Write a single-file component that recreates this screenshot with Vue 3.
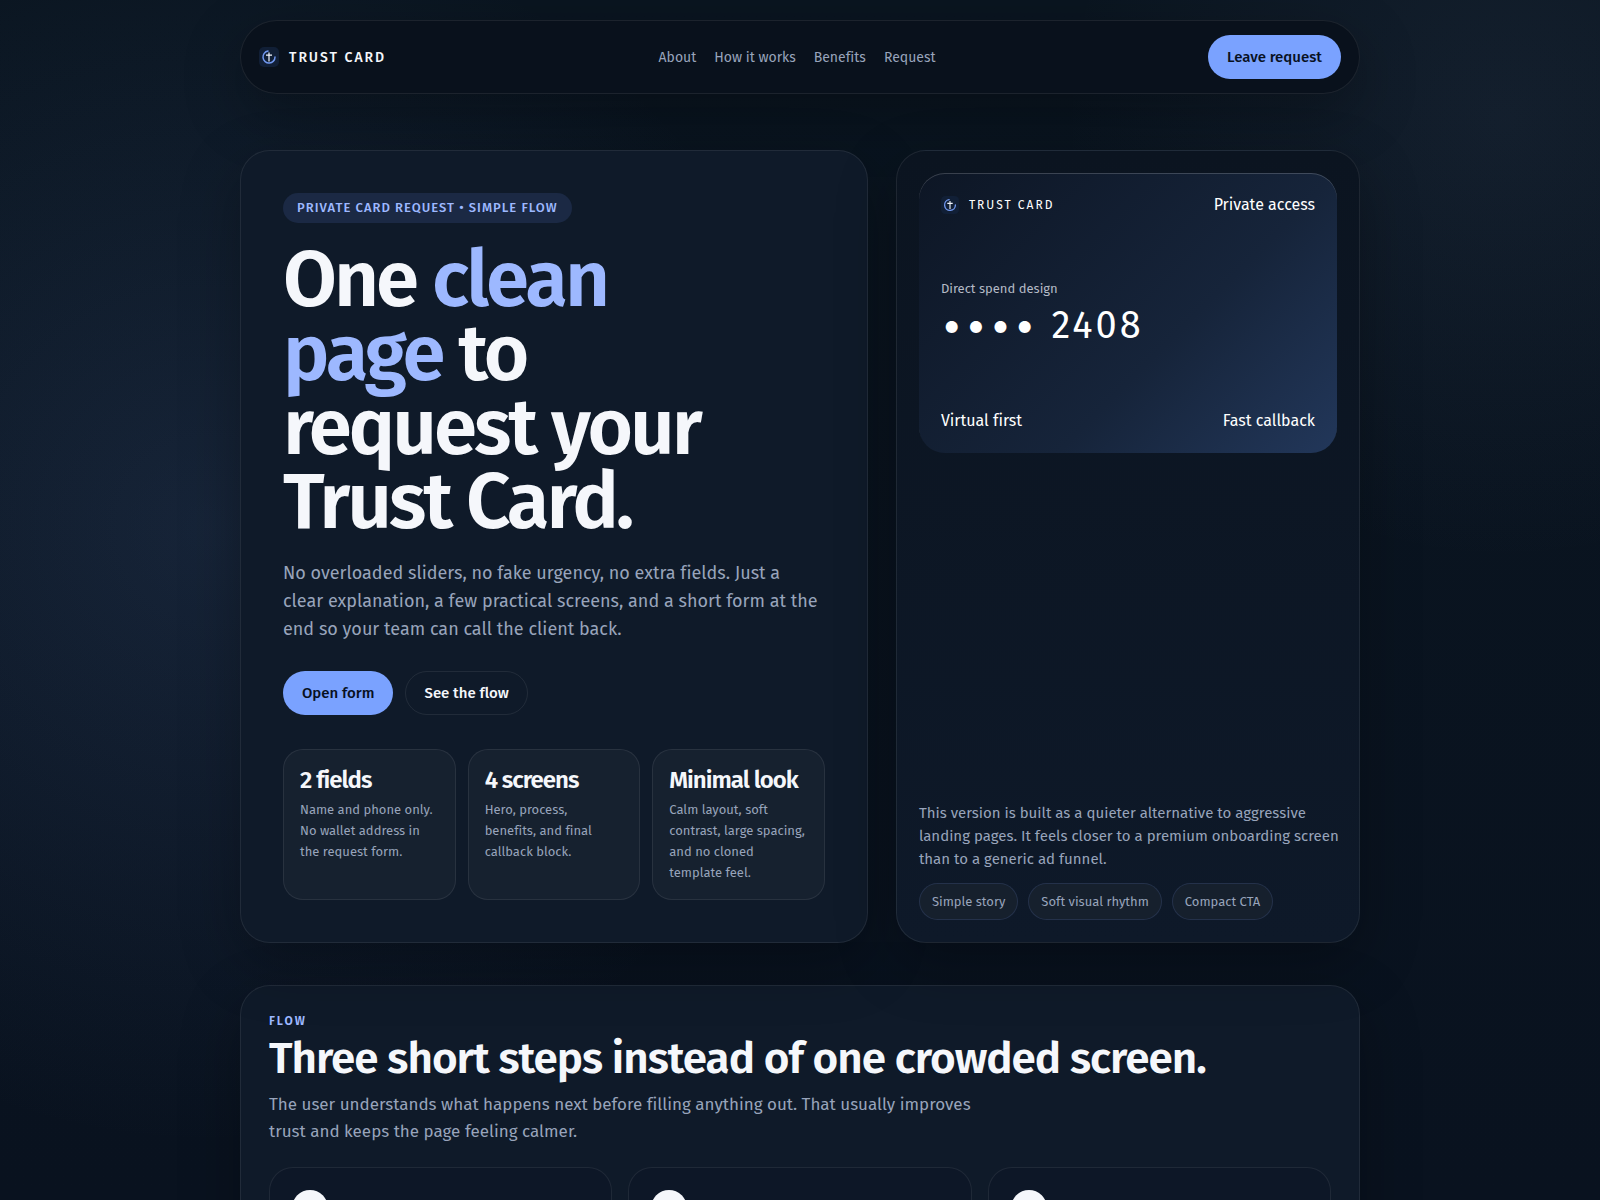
<script setup>
const links = [
  { label: 'About', href: '#about' },
  { label: 'How it works', href: '#flow' },
  { label: 'Benefits', href: '#benefits' },
  { label: 'Request', href: '#request' },
]
const metrics = [
  { title: '2 fields', text: 'Name and phone only. No wallet address in the request form.' },
  { title: '4 screens', text: 'Hero, process, benefits, and final callback block.' },
  { title: 'Minimal look', text: 'Calm layout, soft contrast, large spacing, and no cloned template feel.' },
]
const chips = ['Simple story', 'Soft visual rhythm', 'Compact CTA']
const steps = [1, 2, 3]
</script>

<template>
  <div class="page">
    <header class="topbar">
      <a class="brand" href="#about">
        <svg class="mark" viewBox="0 0 20 20" aria-hidden="true">
          <rect width="20" height="20" rx="5" fill="#111f36" />
          <path d="M9 4.100A6 6 0 1 0 16 10" fill="none" stroke="#7097ef" stroke-width="1.500" stroke-linecap="round" />
          <path d="M10 5.500V14.500M7 8.200H13" fill="none" stroke="#f4f7ff" stroke-width="1.200" />
        </svg>
        <span>TRUST CARD</span>
      </a>
      <nav class="nav">
        <a v-for="link in links" :key="link.label" :href="link.href">{{ link.label }}</a>
      </nav>
      <button class="btn primary" type="button">Leave request</button>
    </header>

    <main>
      <section id="about" class="hero">
        <div class="panel intro">
          <span class="badge">PRIVATE CARD REQUEST • SIMPLE FLOW</span>
          <h1>One <span>clean page</span> to request your Trust Card.</h1>
          <p class="lead">
            No overloaded sliders, no fake urgency, no extra fields. Just a clear explanation, a few
            practical screens, and a short form at the end so your team can call the client back.
          </p>
          <div class="actions">
            <button class="btn primary" type="button">Open form</button>
            <button class="btn ghost" type="button">See the flow</button>
          </div>
          <div class="metrics">
            <article v-for="m in metrics" :key="m.title" class="metric">
              <h3>{{ m.title }}</h3>
              <p>{{ m.text }}</p>
            </article>
          </div>
        </div>

        <aside class="panel preview">
          <div class="card">
            <div class="row">
              <div class="brand small">
                <svg class="mark" viewBox="0 0 20 20" aria-hidden="true">
                  <rect width="20" height="20" rx="5" fill="#111f36" />
                  <path d="M9 4.100A6 6 0 1 0 16 10" fill="none" stroke="#7097ef" stroke-width="1.500" stroke-linecap="round" />
                  <path d="M10 5.500V14.500M7 8.200H13" fill="none" stroke="#f4f7ff" stroke-width="1.200" />
                </svg>
                <span>TRUST CARD</span>
              </div>
              <span>Private access</span>
            </div>
            <div class="number">
              <div class="caption">Direct spend design</div>
              <div class="digits"><span>••••</span> 2408</div>
            </div>
            <div class="row">
              <span>Virtual first</span>
              <span>Fast callback</span>
            </div>
          </div>
          <div class="note">
            <p>
              This version is built as a quieter alternative to aggressive landing pages. It feels
              closer to a premium onboarding screen than to a generic ad funnel.
            </p>
            <ul class="chips">
              <li v-for="chip in chips" :key="chip">{{ chip }}</li>
            </ul>
          </div>
        </aside>
      </section>

      <section id="flow" class="panel flow">
        <div class="kicker">FLOW</div>
        <h2>Three short steps instead of one crowded screen.</h2>
        <p class="sub">
          The user understands what happens next before filling anything out. That usually improves
          trust and keeps the page feeling calmer.
        </p>
        <div class="steps">
          <article v-for="step in steps" :key="step" class="step">
            <span class="dot"></span>
          </article>
        </div>
      </section>
    </main>
  </div>
</template>

<style>
body {
  margin: 0;
  background: #08111d;
}
</style>

<style scoped>
* {
  box-sizing: border-box;
}
.page {
  height: 100vh;
  overflow: hidden;
  padding: 20px 20px 0;
  color: #f5f7fb;
  font-family: "Trebuchet MS", "Fira Sans", "Open Sans", sans-serif;
  font-size: 16px;
  line-height: 1.5;
  font-variant-ligatures: none;
  background:
    radial-gradient(circle at 13% 44%, rgba(100, 135, 205, 0.14), transparent 40%),
    radial-gradient(circle at 94% 10%, rgba(130, 150, 200, 0.08), transparent 24%),
    linear-gradient(180deg, #0a1520, #09121f);
}
h1, h2, h3, p, ul {
  margin: 0;
}
h1, h2, h3 {
  font-weight: 600;
}
a {
  color: inherit;
  text-decoration: none;
}
.topbar, main {
  max-width: 1120px;
  margin: 0 auto;
}
.topbar {
  display: flex;
  align-items: center;
  justify-content: space-between;
  padding: 14px 18px;
  border: 1px solid rgba(255, 255, 255, 0.08);
  border-radius: 999px;
  background: #09111c;
  box-shadow: 0 20px 60px rgba(0, 0, 0, 0.28);
}
.brand {
  display: flex;
  align-items: center;
  gap: 10px;
  font-size: 14px;
  font-weight: 500;
  letter-spacing: 2px;
}
.mark {
  width: 20px;
  height: 20px;
}
.nav {
  display: flex;
  gap: 18px;
  color: #98a4bb;
  font-size: 14px;
}
.btn {
  height: 44px;
  padding: 0 18px;
  border: 1px solid transparent;
  border-radius: 999px;
  font: inherit;
  font-size: 15px;
  font-weight: 500;
}
.primary {
  border: 0;
  padding: 0 19px;
  background: #7aa2ff;
  color: #08111f;
}
.ghost {
  border-color: rgba(255, 255, 255, 0.08);
  background: transparent;
  color: #f5f7fb;
}
.hero {
  display: grid;
  grid-template-columns: 115fr 85fr;
  gap: 28px;
  margin-top: 56px;
}
.panel {
  border: 1px solid rgba(255, 255, 255, 0.08);
  border-radius: 30px;
  background: #0f1a29;
  box-shadow: 0 20px 60px rgba(0, 0, 0, 0.28);
}
.intro {
  padding: 42px;
}
.badge {
  display: inline-flex;
  align-items: center;
  height: 30px;
  padding: 0 14px;
  border-radius: 999px;
  background: #1b2944;
  color: #9db8ff;
  font-size: 13px;
  font-weight: 500;
  letter-spacing: 1px;
}
h1 {
  max-width: 460px;
  margin-top: 20px;
  font-size: 78px;
  line-height: 74px;
  letter-spacing: -3px;
}
h1 span {
  color: #9db8ff;
}
.lead {
  max-width: 536px;
  margin-top: 20px;
  color: #98a4bb;
  font-size: 18px;
  line-height: 28px;
}
.actions {
  display: flex;
  gap: 12px;
  margin-top: 28px;
}
.metrics {
  display: grid;
  grid-template-columns: repeat(3, 1fr);
  gap: 12px;
  margin-top: 34px;
}
.metric {
  padding: 16px;
  border: 1px solid rgba(255, 255, 255, 0.08);
  border-radius: 20px;
  background: rgba(255, 255, 255, 0.03);
}
.metric h3 {
  font-size: 24px;
  line-height: 29px;
  letter-spacing: -1px;
}
.metric p {
  max-width: 137px;
  margin-top: 4px;
  color: #98a4bb;
  font-size: 13px;
  line-height: 21px;
}
.preview {
  display: flex;
  flex-direction: column;
  justify-content: space-between;
  padding: 22px;
  background: linear-gradient(180deg, #0b1420, #0e1929);
}
.card {
  display: flex;
  flex-direction: column;
  justify-content: space-between;
  height: 280px;
  padding: 20px 22px;
  border-radius: 26px;
  color: #fff;
  background: linear-gradient(135deg, #0d1625 0%, #16243a 60%, #22375a 100%);
  box-shadow: inset 0 1px 0 rgba(255, 255, 255, 0.18);
}
.row {
  display: flex;
  align-items: center;
  justify-content: space-between;
}
.small {
  font-size: 12px;
  font-weight: 400;
}
.small .mark {
  width: 18px;
  height: 18px;
}
.number {
  padding-top: 4px;
}
.caption {
  color: #b4bac5;
  font-size: 13px;
}
.digits {
  font-size: 38px;
  letter-spacing: 3px;
  line-height: 52px;
}
.digits span {
  font-family: Inter, sans-serif;
}
.note {
  width: calc(100% + 8px);
}
.note p {
  color: #98a4bb;
  font-size: 15px;
  line-height: 23px;
}
.chips {
  display: flex;
  gap: 10px;
  margin-top: 12px;
  padding: 0;
  list-style: none;
}
.chips li {
  padding: 7px 12px;
  border: 1px solid rgba(110, 145, 230, 0.16);
  border-radius: 999px;
  background: #16202d;
  color: #98a4bb;
  font-size: 13px;
  line-height: 21px;
}
.flow {
  margin-top: 42px;
  padding: 28px;
}
.kicker {
  color: #9db8ff;
  font-size: 12px;
  font-weight: 600;
  line-height: 14px;
  letter-spacing: 2px;
}
h2 {
  margin-top: 8px;
  font-size: 44px;
  line-height: 46px;
  letter-spacing: -1px;
}
.sub {
  max-width: 720px;
  margin-top: 9px;
  color: #98a4bb;
  font-size: 17px;
  line-height: 27px;
}
.steps {
  display: grid;
  grid-template-columns: repeat(3, 1fr);
  gap: 16px;
  margin-top: 22px;
}
.step {
  min-height: 220px;
  padding: 22px;
  border: 1px solid rgba(255, 255, 255, 0.08);
  border-radius: 24px;
  background: #0d1727;
}
.dot {
  display: block;
  width: 36px;
  height: 36px;
  border-radius: 50%;
  background: #f5f7fb;
}
</style>
